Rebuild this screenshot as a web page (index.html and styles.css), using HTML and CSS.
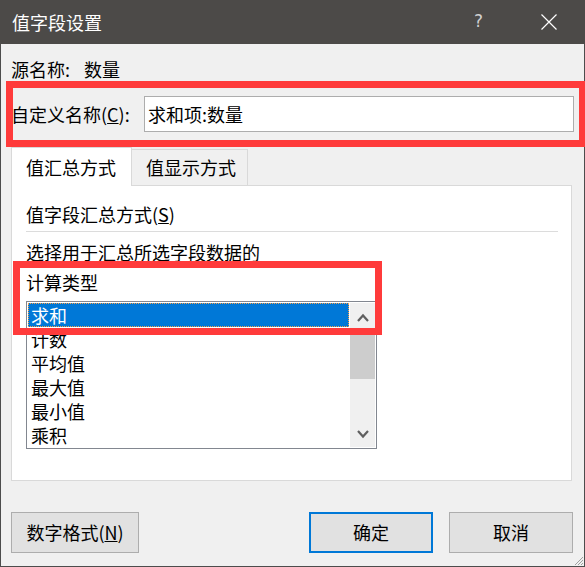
FILE: index.html
```html
<!DOCTYPE html>
<html lang="zh-CN">
<head>
<meta charset="utf-8">
<title>值字段设置</title>
<link rel="stylesheet" href="styles.css">
</head>
<body>
<div class="window">
  <div class="titlebar">
    <span class="title">值字段设置</span>
    <span class="help">?</span>
    <svg class="close" width="16" height="16" viewBox="0 0 16 16"><path d="M0.5 0.5 L15.5 15.5 M15.5 0.5 L0.5 15.5" stroke="#ffffff" stroke-width="1.2" fill="none"/></svg>
  </div>
  <div class="content">
    <div class="source"><span>源名称:</span><span class="source-value">数量</span></div>
    <div class="name-row">
      <span class="name-label">自定义名称(<u>C</u>):</span>
      <div class="textbox">求和项:数量</div>
    </div>
    <div class="tabs">
      <div class="tab active">值汇总方式</div>
      <div class="tab">值显示方式</div>
    </div>
    <div class="panel">
      <div class="group-title">值字段汇总方式(<u>S</u>)</div>
      <div class="sep"></div>
      <div class="hint">选择用于汇总所选字段数据的<br>计算类型</div>
      <div class="listbox">
        <ul class="items">
          <li class="selected">求和</li>
          <li>计数</li>
          <li>平均值</li>
          <li>最大值</li>
          <li>最小值</li>
          <li>乘积</li>
        </ul>
        <div class="scrollbar">
          <div class="sb-btn sb-up"><svg width="12" height="9" viewBox="0 0 12 9"><path d="M1 8 L6 2.5 L11 8" stroke="#606060" stroke-width="2.2" fill="none"/></svg></div>
          <div class="sb-thumb"></div>
          <div class="sb-track"></div>
          <div class="sb-btn sb-down"><svg width="12" height="9" viewBox="0 0 12 9"><path d="M1 1 L6 6.5 L11 1" stroke="#606060" stroke-width="2.2" fill="none"/></svg></div>
        </div>
      </div>
    </div>
    <div class="buttons">
      <div class="btn btn-format">数字格式(<u>N</u>)</div>
      <div class="btn btn-ok">确定</div>
      <div class="btn btn-cancel">取消</div>
    </div>
  </div>
  <div class="mark mark-name"></div>
  <div class="mark mark-list"></div>
  <svg class="grip" width="12" height="12" viewBox="0 0 12 12"><path d="M11 3 L3 11 M11 6 L6 11 M11 9 L9 11" stroke="#a0a0a0" stroke-width="1" fill="none"/></svg>
</div>
</body>
</html>
```

FILE: styles.css
```css
* { box-sizing: border-box; }
html, body { margin: 0; padding: 0; }
body {
  width: 585px;
  height: 567px;
  overflow: hidden;
  font-family: "Noto Sans CJK SC", "Noto Sans", sans-serif;
  font-size: 18px;
  color: #000;
  background: #f0f0f0;
}
.window {
  position: relative;
  width: 585px;
  height: 567px;
  background: #f0f0f0;
  border-left: 1px solid #4c4c4c;
  border-right: 1px solid #4c4c4c;
  border-bottom: 1px solid #4c4c4c;
  display: flex;
  flex-direction: column;
}
.titlebar {
  height: 44px;
  margin: 0 -1px;
  background: #4c4a48;
  display: flex;
  align-items: center;
  padding-left: 12px;
  color: #fff;
  flex: none;
}
.title { font-size: 18px; line-height: 24px; }
.help {
  margin-left: auto;
  color: #d0d0d0;
  font-family: "DejaVu Sans", sans-serif;
  font-size: 17px;
  line-height: 20px;
  margin-top: -2px;
}
.close { margin-left: 58px; margin-right: 28px; margin-top: -1px; }
.content {
  padding: 0 10px;
  display: flex;
  flex-direction: column;
}
.source { margin-top: 13px; line-height: 24px; }
.source-value { margin-left: 14px; }
.name-row {
  margin-top: 15px;
  display: flex;
  align-items: center;
  height: 36px;
}
.name-label { width: 133px; line-height: 24px; flex: none; }
.textbox {
  flex: 1;
  height: 36px;
  background: #fff;
  border: 1px solid #adadad;
  padding: 5px 3px 0;
  line-height: 24px;
}
.tabs {
  margin-top: 15px;
  height: 38px;
  display: flex;
  align-items: flex-end;
  position: relative;
  z-index: 1;
}
.tab {
  line-height: 24px;
  border: 1px solid #d9d9d9;
  border-bottom: 0;
}
.tab.active {
  width: 121px;
  height: 39px;
  margin-bottom: -1px;
  background: #fff;
  padding: 7px 0 0 14px;
}
.tab:not(.active) {
  width: 116px;
  height: 36px;
  border-left: 0;
  background: #f0f0f0;
  padding: 5px 0 0 14px;
}
.panel {
  height: 296px;
  margin-right: 2px;
  background: #fff;
  border: 1px solid #d9d9d9;
  padding: 16px 13px 0 14px;
}
.group-title { line-height: 24px; }
.sep { height: 1px; background: #dcdcdc; margin-top: 5px; }
.hint { margin-top: 5px; line-height: 30px; }
.listbox {
  margin-top: 4px;
  width: 351px;
  height: 148px;
  border: 1px solid #828790;
  padding: 1px;
  display: flex;
  background: #fff;
}
.items {
  list-style: none;
  margin: 0;
  padding: 0;
  width: 321px;
  margin-right: 1px;
}
.items li {
  height: 24px;
  line-height: 24px;
  padding-left: 3px;
}
.items li.selected {
  background: #0078d7;
  color: #fff;
  outline: 1px dotted #f5a04a;
  outline-offset: -1px;
}
.scrollbar {
  width: 25px;
  height: 144px;
  background: #f0f0f0;
  display: flex;
  flex-direction: column;
}
.sb-btn {
  height: 32px;
  display: flex;
  justify-content: center;
  align-items: flex-start;
}
.sb-up { padding-top: 10px; }
.sb-down { padding-top: 15px; }
.sb-down svg { display: block; }
.sb-up svg { display: block; }
.sb-thumb { height: 44px; background: #cdcdcd; }
.sb-track { flex: 1; }
.buttons {
  margin-top: 31px;
  margin-right: 1px;
  display: flex;
}
.btn {
  height: 41px;
  background: #e1e1e1;
  border: 1px solid #adadad;
  display: flex;
  align-items: center;
  justify-content: center;
  line-height: 24px;
  padding-bottom: 1px;
}
.btn-format { width: 128px; }
.btn-ok { width: 124px; margin-left: auto; border: 2px solid #0078d7; }
.btn-cancel { width: 124px; margin-left: 16px; }
.mark {
  position: absolute;
  border: 7px solid #ff3b3b;
  pointer-events: none;
  z-index: 5;
}
.mark-name { left: 5px; top: 81px; width: 580px; height: 66px; }
.mark-list { left: 12px; top: 261px; width: 369px; height: 74px; }
.grip { position: absolute; right: 0; bottom: 0; }
```
